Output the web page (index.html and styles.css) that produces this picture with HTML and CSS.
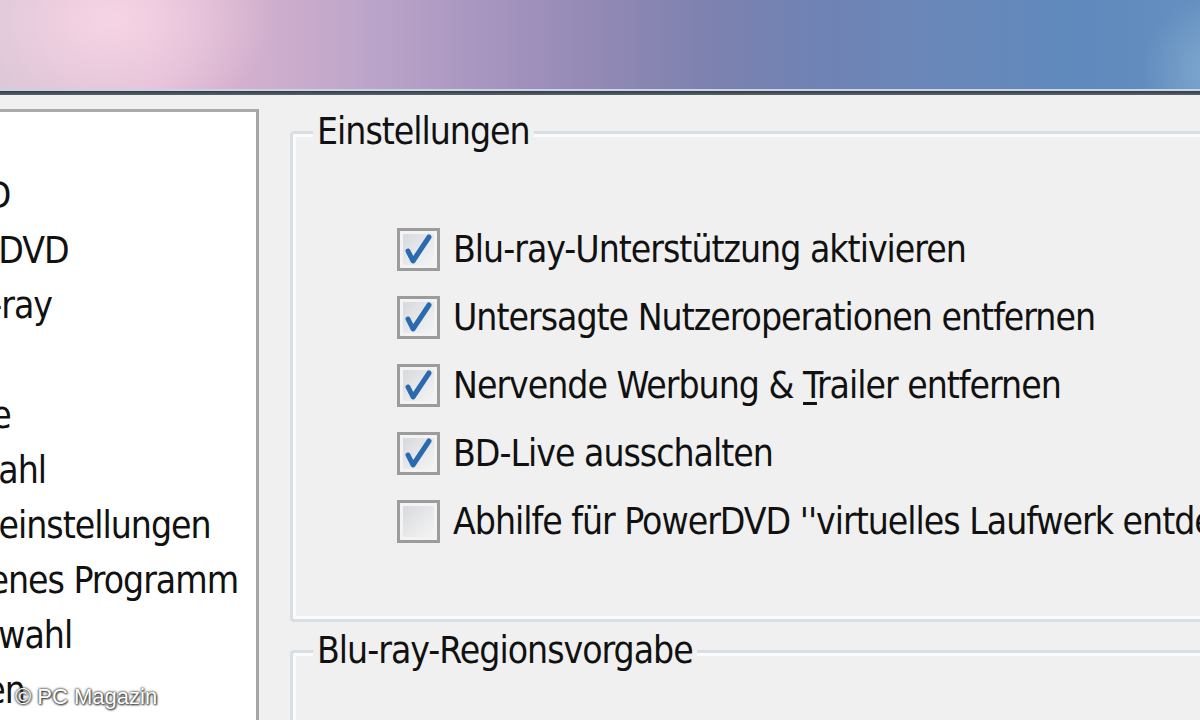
FILE: index.html
```html
<!DOCTYPE html>
<html lang="de">
<head>
    <meta charset="UTF-8">
    <meta name="viewport" content="width=device-width, initial-scale=1.0">
    <title>Einstellungen – Blu-ray</title>
    <link rel="stylesheet" href="styles.css">
</head>
<body>
    <div class="titlebar"></div>
    <div class="frame-edge"></div>

    <div class="window">
        <ul class="tree">
            <li>DVD</li>
            <li>HD DVD</li>
            <li>Blu-ray</li>
            <li>CD</li>
            <li>Hilfe</li>
            <li>Anzahl</li>
            <li>Bildeinstellungen</li>
            <li>Eigenes Programm</li>
            <li>Auswahl</li>
            <li>Oben</li>
        </ul>

        <div class="pane">
            <fieldset class="group group-settings">
                <legend>Einstellungen</legend>
                <div class="checklist">
                    <label class="check">
                        <span class="box"><svg viewBox="0 0 37 37"><path d="M8 20 L13 30 L29 6"/></svg></span>
                        <span>Blu-ray-Unterstützung aktivieren</span>
                    </label>
                    <label class="check">
                        <span class="box"><svg viewBox="0 0 37 37"><path d="M8 20 L13 30 L29 6"/></svg></span>
                        <span>Untersagte Nutzeroperationen entfernen</span>
                    </label>
                    <label class="check">
                        <span class="box"><svg viewBox="0 0 37 37"><path d="M8 20 L13 30 L29 6"/></svg></span>
                        <span>Nervende Werbung &amp; <u>T</u>railer entfernen</span>
                    </label>
                    <label class="check">
                        <span class="box"><svg viewBox="0 0 37 37"><path d="M8 20 L13 30 L29 6"/></svg></span>
                        <span>BD-Live ausschalten</span>
                    </label>
                    <label class="check">
                        <span class="box"></span>
                        <span>Abhilfe für PowerDVD ''virtuelles Laufwerk entdeckt''</span>
                    </label>
                </div>
            </fieldset>

            <fieldset class="group group-region">
                <legend>Blu-ray-Regionsvorgabe</legend>
            </fieldset>
        </div>
    </div>

    <div class="watermark">© PC Magazin</div>
</body>
</html>
```

FILE: styles.css
```css
html, body {
    margin: 0;
    height: 720px;
    overflow: hidden;
}
body {
    background: #f0f0f0;
    color: #111;
    font-family: "DejaVu Sans Condensed", "DejaVu Sans", sans-serif;
    font-stretch: condensed;
    font-size: 37px;
    letter-spacing: -1px;
    position: relative;
}

/* window caption (aero glass) */
.titlebar {
    height: 89px;
    background:
        radial-gradient(ellipse 220px 140px at 110px 20px, rgba(248, 214, 230, 0.9), rgba(248, 214, 230, 0) 75%),
        radial-gradient(ellipse 90px 90px at 1215px 70px, rgba(140, 178, 214, 0.7), rgba(140, 178, 214, 0) 80%),
        linear-gradient(90deg, #d9c6d6 0%, #e2bfd6 12%, #d4b0ce 20%, #bea6ca 30%, #a896c0 40%, #9289b5 50%, #7f82af 58%, #6f82b3 68%, #6a87b9 78%, #5f89bc 90%, #6590c0 100%);
    border-bottom: 2px solid #c9d3e6;
}
.frame-edge {
    height: 4px;
    background: linear-gradient(#343c44, #59636b);
}

.window {
    display: flex;
    height: 625px;
}

/* navigation tree on the left (cut off by the crop) */
.tree {
    list-style: none;
    margin: 14px 0 0 -120px;
    padding: 56px 0 0 60px;
    width: 379px;
    box-sizing: border-box;
    flex: none;
    background: #fff;
    border-top: 3px solid #ababab;
    border-right: 3px solid #a5a5a5;
    white-space: nowrap;
    overflow: hidden;
}
.tree li {
    height: 55px;
    line-height: 55px;
}

.pane {
    flex: 1;
    padding-left: 31px;
    min-width: 0;
}

.group {
    width: 1000px;
    margin: 14px 0 0;
    padding: 0 0 76px 104px;
    border: 3px solid #d8dfe2;
    border-radius: 4px;
    box-shadow: inset 0 0 0 3px #fbfbfb;
}
.group legend {
    margin-left: -84px;
    padding: 0 4px;
    line-height: 46px;
    background: #f0f0f0;
}
.group-region {
    margin-top: 6px;
    height: 300px;
}

.checklist {
    display: flex;
    flex-direction: column;
    gap: 24px;
    margin-top: 72px;
}
.check {
    display: flex;
    align-items: center;
    gap: 13px;
    height: 44px;
    white-space: nowrap;
}
.check u {
    text-decoration-thickness: 3px;
    text-underline-offset: 4px;
}

.box {
    width: 43px;
    height: 43px;
    box-sizing: border-box;
    flex: none;
    border: 3px solid #9c9c9c;
    background: linear-gradient(135deg, #d3d6da 0%, #e4e6e8 45%, #f6f6f6 100%);
    box-shadow: inset 0 0 0 3px #f3f3f3;
}
.box svg {
    display: block;
    width: 37px;
    height: 37px;
}
.box path {
    fill: none;
    stroke: #2a6ab1;
    stroke-width: 5;
    stroke-linecap: round;
    stroke-linejoin: round;
}

.watermark {
    position: absolute;
    left: 15px;
    top: 684px;
    font-family: "Liberation Sans", Arial, sans-serif;
    font-size: 22px;
    letter-spacing: 0;
    color: #fff;
    text-shadow: 0 0 2px #333, 0 0 3px #444, 1px 1px 2px #444;
}
```
